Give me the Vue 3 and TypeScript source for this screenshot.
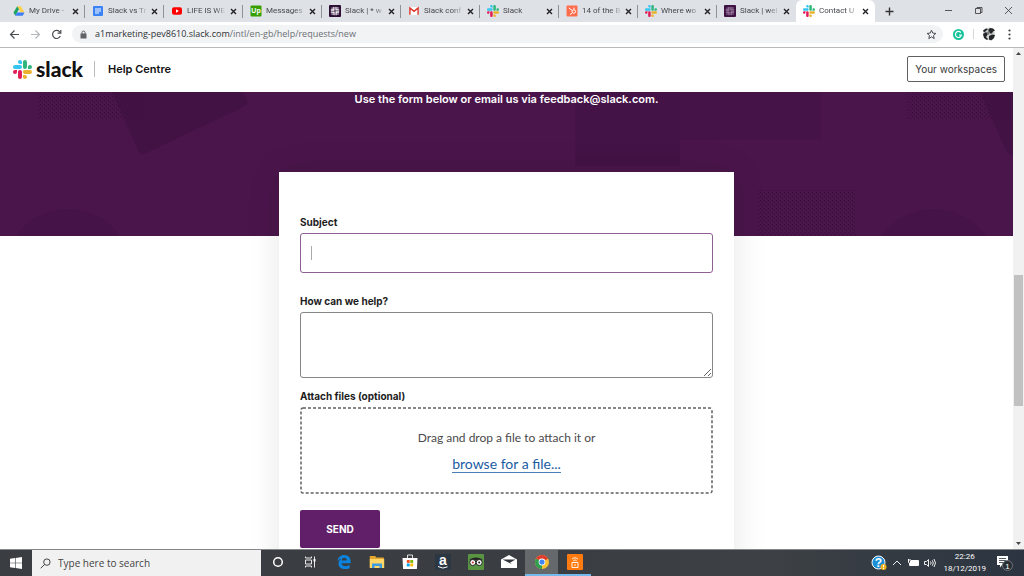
<script setup lang="ts">
import { ref } from 'vue'

interface Tab {
  title: string
  icon: string
  active?: boolean
}

const tabs: Tab[] = [
  { title: 'My Drive -', icon: 'drive' },
  { title: 'Slack vs Tr', icon: 'docs' },
  { title: 'LIFE IS WE', icon: 'youtube' },
  { title: 'Messages', icon: 'upwork' },
  { title: 'Slack | * w', icon: 'slack-dark' },
  { title: 'Slack conf', icon: 'gmail' },
  { title: 'Slack', icon: 'slack' },
  { title: '14 of the B', icon: 'hubspot' },
  { title: 'Where wo', icon: 'slack' },
  { title: 'Slack | wel', icon: 'slack-purple' },
  { title: 'Contact U', icon: 'slack', active: true },
]

const apps = [
  { name: 'Cortana', icon: 'cortana' },
  { name: 'Task view', icon: 'taskview' },
  { name: 'Edge', icon: 'edge' },
  { name: 'File Explorer', icon: 'folder' },
  { name: 'Store', icon: 'store' },
  { name: 'Amazon', icon: 'amazon' },
  { name: 'Tripadvisor', icon: 'trip' },
  { name: 'Mail', icon: 'mail' },
  { name: 'Chrome', icon: 'chrome', state: 'current' },
  { name: 'Hotspot', icon: 'hotspot', state: 'open' },
]

const subject = ref('')
const message = ref('')
const picker = ref<HTMLInputElement | null>(null)
</script>

<template>
  <div class="screen">
    <svg class="defs" aria-hidden="true">
      <symbol id="i-slack" viewBox="0 0 123 123">
        <path fill="#e01e5a" d="M25.8 77.6c0 7.1-5.8 12.9-12.9 12.9S0 84.7 0 77.6s5.8-12.9 12.9-12.9h12.9v12.9zm6.5 0c0-7.1 5.8-12.9 12.9-12.9s12.9 5.8 12.9 12.9v32.3c0 7.1-5.8 12.9-12.9 12.9s-12.9-5.8-12.9-12.9V77.6z" />
        <path fill="#36c5f0" d="M45.2 25.8c-7.1 0-12.9-5.8-12.9-12.9S38.1 0 45.2 0s12.9 5.8 12.9 12.9v12.9H45.2zm0 6.5c7.1 0 12.9 5.8 12.9 12.9s-5.8 12.9-12.9 12.9H12.9C5.8 58.1 0 52.3 0 45.2s5.8-12.9 12.9-12.9h32.3z" />
        <path fill="#2eb67d" d="M97 45.2c0-7.1 5.8-12.9 12.9-12.9s12.9 5.8 12.9 12.9-5.8 12.9-12.9 12.9H97V45.2zm-6.5 0c0 7.1-5.8 12.9-12.9 12.9s-12.9-5.8-12.9-12.9V12.900C64.700 5.800 70.500 0 77.600 0s12.900 5.800 12.900 12.900v32.300z" />
        <path fill="#ecb22e" d="M77.6 97c7.1 0 12.9 5.8 12.9 12.9s-5.8 12.9-12.9 12.9-12.9-5.8-12.9-12.9V97h12.9zm0-6.5c-7.1 0-12.9-5.8-12.9-12.9s5.8-12.9 12.9-12.9h32.3c7.1 0 12.9 5.8 12.9 12.9s-5.8 12.9-12.9 12.9H77.6z" />
      </symbol>
      <symbol id="i-hash" viewBox="0 0 12 12">
        <g fill="none" stroke-width="1.3" stroke-linecap="round">
          <path d="M4.9 2.3V5H2.3M7.1 9.7V7h2.6M9.7 4.9H7V2.3M2.3 7.1H5v2.6M3 3.1h.2M8.8 3h.2M3 9h.2M8.9 9h.2" />
        </g>
      </symbol>
      <symbol id="i-slack-dark" viewBox="0 0 12 12">
        <rect width="12" height="12" rx="1" fill="#2c0d33" />
        <use href="#i-hash" stroke="#fff" />
      </symbol>
      <symbol id="i-slack-purple" viewBox="0 0 12 12">
        <rect width="12" height="12" rx="1" fill="#3d1142" />
        <use href="#i-hash" stroke="#a283a6" />
      </symbol>
      <symbol id="i-drive" viewBox="0 0 12 12">
        <path fill="#ffcf48" d="M4.2 1.2h3.6l3.7 6.3H7.9z" />
        <path fill="#1da362" d="M4.2 1.2 6 4.3 2.3 10.8.5 7.6z" />
        <path fill="#3d7df5" d="M4.1 7.5h7.4l-1.8 3.3H2.3z" />
      </symbol>
      <symbol id="i-docs" viewBox="0 0 12 12">
        <rect x="1" y="1" width="10" height="10" rx="1" fill="#3b82f6" />
        <path stroke="#fff" stroke-width="1.1" d="M3 4h6M3 6h6M3 8h4" />
      </symbol>
      <symbol id="i-youtube" viewBox="0 0 12 12">
        <rect x="1" y="2.3" width="10" height="7.4" rx="2" fill="#f00" />
        <path fill="#fff" d="m5 4.3 2.9 1.7L5 7.7z" />
      </symbol>
      <symbol id="i-gmail" viewBox="0 0 12 12">
        <path fill="#fff" d="M1 2.2h10v7.6H1z" />
        <path fill="none" stroke="#d93025" stroke-width="1.4" d="M1.9 9.8V3L6 6.4 10.1 3v6.8" />
      </symbol>
      <symbol id="i-hubspot" viewBox="0 0 12 12">
        <rect x=".5" y=".5" width="11" height="11" rx="1" fill="#ff6e4c" />
        <path fill="none" stroke="#fff" d="m2.8 2.9 3.4 2.6M8 2.6v2M6 8 4 9.6" />
        <circle cx="7.8" cy="6.5" r="1.7" fill="none" stroke="#fff" />
      </symbol>

      <symbol id="i-cortana" viewBox="0 0 16 16">
        <circle cx="8" cy="8" r="4.3" fill="none" stroke="#fff" stroke-width="1.5" />
      </symbol>
      <symbol id="i-taskview" viewBox="0 0 16 16">
        <path fill="none" stroke="#e8e8e8" d="M2.5 2.5V4h6V2.5M2.5 13.5V12h6v1.5M2.5 6h6v4h-6zM11.5 2.5v11" />
        <path fill="#fff" d="M10.5 5h2v2.5h-2z" />
      </symbol>
      <symbol id="i-edge" viewBox="0 0 16 16">
        <path fill="#0b84e0" d="M1.4 7.1C1.9 3.4 4.6 1 8.2 1c4 0 6.4 2.8 6.4 6.4v1.8H5.5c.1 2.1 2 3 4.1 3 1.5 0 2.9-.4 4-1.1v3.1c-1.2.6-2.8.9-4.5.9-4 0-6.6-2-6.6-5.6 0-2.3 1.2-4.2 3.2-5.3-1.8.4-3.4 1.5-4.3 2.9zM5.6 6.5h5.2c0-1.7-.9-2.7-2.5-2.7-1.5 0-2.5 1.1-2.7 2.7z" />
      </symbol>
      <symbol id="i-folder" viewBox="0 0 16 16">
        <path fill="#e6a72e" d="M.8 2h5.4l1 1.5h7.6v10H.8z" />
        <path fill="#ffd766" d="M.8 5h14.400v9H.8z" />
        <path fill="#3d9be0" d="M3 14V9.500h10V14h-2.500v-2h-5v2z" />
      </symbol>
      <symbol id="i-store" viewBox="0 0 16 16">
        <path fill="none" stroke="#ddd" d="M5.5 4.500V1h5v3.500" />
        <path fill="#fff" d="M.5 4h15l-.6 11H1.100z" />
        <path fill="#f25022" d="M4.800 6h2.900v2.900H4.800z" />
        <path fill="#7fba00" d="M8.300 6h2.900v2.900H8.300z" />
        <path fill="#00a4ef" d="M4.800 9.500h2.900v2.900H4.800z" />
        <path fill="#ffb900" d="M8.300 9.500h2.900v2.900H8.300z" />
      </symbol>
      <symbol id="i-trip" viewBox="0 0 16 16">
        <rect width="16" height="16" rx="1" fill="#589442" />
        <path fill="#222" d="M1.5 5.200Q8 2 14.500 5.200l-1.500 1H3z" />
        <g stroke="#222" fill="#fff">
          <circle cx="4.8" cy="8.5" r="3" />
          <circle cx="11.2" cy="8.5" r="3" />
        </g>
        <circle cx="4.8" cy="8.5" r="1.1" fill="#c33" />
        <circle cx="11.2" cy="8.5" r="1.1" fill="#222" />
      </symbol>
      <symbol id="i-mail" viewBox="0 0 16 16">
        <path fill="#fff" d="M0 5.500 8 1l8 4.500V14H0z" />
        <path fill="#30363c" d="M1.500 5.500h13L9 8.700l2.500 1.800z" />
      </symbol>
      <symbol id="i-chrome" viewBox="0 0 16 16">
        <circle cx="8" cy="8" r="7" fill="#fbc02d" />
        <path fill="#df3b2f" d="M8 8 1.940 4.500A7 7 0 0 1 14.060 4.500z" />
        <path fill="#2f9e4f" d="M8 8v7A7 7 0 0 1 1.940 4.500z" />
        <path fill="#df3b2f" d="M8 4.500h6.060L8 8z" />
        <circle cx="8" cy="8" r="3.4" fill="#fff" />
        <circle cx="8" cy="8" r="2.6" fill="#4285f4" />
      </symbol>
      <symbol id="i-hotspot" viewBox="0 0 16 16">
        <rect width="16" height="16" rx="1" fill="#ff7b0f" />
        <path fill="none" stroke="#fff" stroke-width=".9" d="M5 5.200a4 4 0 0 1 6 0M6.300 6.800a2.300 2.300 0 0 1 3.400 0M5 8.500h6v5H5zM8 10v2" />
      </symbol>
    </svg>

    <nav class="tabstrip" aria-label="Tabs">
      <div v-for="(tab, i) in tabs" :key="i" class="tab" :class="{ active: tab.active, quiet: i === 9 }">
        <svg v-if="tab.icon === 'upwork'" class="favicon" viewBox="0 0 12 12">
          <rect x=".5" y=".5" width="11" height="11" rx="1" fill="#37a000" />
          <text x="6" y="8" font-family="Liberation Sans, sans-serif" font-weight="700" font-size="7" text-anchor="middle" fill="#fff">Up</text>
        </svg>
        <svg v-else class="favicon"><use :href="'#i-' + tab.icon" /></svg>
        <span class="tab-title">{{ tab.title }}</span>
        <button class="tab-close" aria-label="Close tab">
          <svg viewBox="0 0 7 7"><path d="m1 1 5 5m0-5L1 6" /></svg>
        </button>
      </div>
      <button class="new-tab" aria-label="New tab">
        <svg viewBox="0 0 9 9"><path d="M4.5.5v8m-4-4h8" /></svg>
      </button>
      <div class="window-controls">
        <button aria-label="Minimise"><svg viewBox="0 0 9 9"><path d="M1 4.5h7" /></svg></button>
        <button aria-label="Restore"><svg viewBox="0 0 9 9"><path d="M1.5 2.5h5v5h-5zM3 2.500v-1h5v5H6.500" /></svg></button>
        <button aria-label="Close"><svg viewBox="0 0 9 9"><path d="m1 1 7 7m0-7L1 8" /></svg></button>
      </div>
    </nav>

    <div class="toolbar">
      <button class="nav-btn" aria-label="Back"><svg viewBox="0 0 11 11"><path d="M10 5.5H1.500M5.500 1.500l-4 4 4 4" /></svg></button>
      <button class="nav-btn dim" aria-label="Forward"><svg viewBox="0 0 11 11"><path d="M1 5.5h8.500M5.500 1.500l4 4-4 4" /></svg></button>
      <button class="nav-btn" aria-label="Reload"><svg viewBox="0 0 11 11"><path d="M9.3 7A4 4 0 1 1 8.500 2.700L9.700 4" /><path d="M9.8 1v3.200H6.600" /></svg></button>
      <div class="address">
        <svg class="lock" viewBox="0 0 7 9"><path fill="#5f6368" d="M.5 3.500h6v5h-6z" /><path fill="none" stroke="#5f6368" d="M2 4V2.500a1.500 1.500 0 0 1 3 0V4" /></svg>
        <span class="url">a1marketing-pev8610.slack.com<span class="path">/intl/en-gb/help/requests/new</span></span>
        <svg class="star" viewBox="0 0 11 11"><path d="m5.500 1.200 1.300 2.900 3.100.3-2.400 2.100.7 3.100-2.700-1.700-2.700 1.700.7-3.100L1.100 4.400l3.100-.3z" /></svg>
      </div>
      <svg class="grammarly" viewBox="0 0 11 11">
        <circle cx="5.5" cy="5.5" r="5.5" fill="#15c39a" />
        <path fill="none" stroke="#fff" stroke-width="1.2" d="M7.800 3.600A3 3 0 1 0 8.400 6H6" />
      </svg>
      <span class="divider"></span>
      <svg class="avatar" viewBox="0 0 14 14">
        <path fill="#d4d6d2" d="M2 2q5-3 10 0l1 5-2 6H4L1 8z" />
        <path fill="#23262a" d="M1 3.500 4 1.500l2 .5-2 2-2 1.500zM6 3l2-2 3 .5 2 2-2 1-1 2H8l-1-2zM1 7l3-2 2 2-2 3 2 2-1 1-3-2zM7 9l3-1.500 3 .5-1 3-3 2.500-2-1z" />
        <path fill="#777" d="m5 5 2-1 1 2-2 2z" />
      </svg>
      <button class="kebab" aria-label="Menu">
        <svg viewBox="0 0 3 11"><circle cx="1.5" cy="1.5" r="1.1" /><circle cx="1.5" cy="5.5" r="1.1" /><circle cx="1.5" cy="9.5" r="1.1" /></svg>
      </button>
    </div>

    <div class="viewport">
      <div class="page">
        <header class="site-header">
          <a href="#" class="brand">
            <svg class="brand-mark"><use href="#i-slack" /></svg>
            <span class="brand-name">slack</span>
          </a>
          <a href="#" class="section">Help Centre</a>
          <a href="#" class="workspaces">Your workspaces</a>
        </header>

        <main>
          <section class="hero">
            <svg class="shapes" aria-hidden="true">
              <defs>
                <pattern id="dots" width="4" height="4" patternUnits="userSpaceOnUse">
                  <path fill="#350f38" d="M0 0h1v1H0zM2 2h1v1H2z" />
                </pattern>
              </defs>
              <g fill="#421244">
                <path d="M112 0h131l4 9q1 3-2 5L144 62q-3 1-5-2z" />
                <path d="M980 0h131l4 9q1 3-2 5l-101 48q-3 1-5-2z" />
                <path d="M680 0h141v48H680z" opacity=".6" />
                <path d="M575 0h105v74H575z" opacity=".6" />
                <ellipse cx="68" cy="175" rx="62" ry="58" opacity=".6" />
                <ellipse cx="934" cy="175" rx="62" ry="58" opacity=".6" />
              </g>
              <g fill="url(#dots)">
                <path d="M38 0h106v28H38z" />
                <path d="M906 0h106v28H906z" />
                <path d="M575 0h105v74H575z" opacity=".7" />
                <path d="M758 98h97v46h-97z" />
                <path d="M317 64h88v16h-88z" opacity=".2" />
              </g>
            </svg>
            <p>Use the form below or email us via feedback@slack.com.</p>
          </section>

          <form class="card" @submit.prevent>
            <label for="subject">Subject</label>
            <input id="subject" v-model="subject" class="subject" type="text" />
            <label for="message">How can we help?</label>
            <textarea id="message" v-model="message"></textarea>
            <label for="files">Attach files (optional)</label>
            <div class="dropzone">
              <svg class="outline" aria-hidden="true"><rect x="1" y="1" rx="2" /></svg>
              <input id="files" ref="picker" class="picker" type="file" multiple />
              <p>Drag and drop a file to attach it or</p>
              <p><a href="#" @click.prevent="picker?.click()">browse for a file...</a></p>
            </div>
            <button class="send" type="submit">SEND</button>
          </form>
        </main>
      </div>

      <div class="scrollbar" aria-hidden="true">
        <svg viewBox="0 0 11 11"><path d="m5.500 4 2.500 3H3z" /></svg>
        <div class="before"></div>
        <div class="thumb"></div>
        <div class="after"></div>
        <svg viewBox="0 0 11 11"><path d="M5.500 7 3 4h5z" /></svg>
      </div>
    </div>

    <footer class="taskbar">
      <button class="start" aria-label="Start">
        <svg viewBox="0 0 12 12"><path fill="#fff" d="M0 1.800 5 1v4.700H0zM5.600.9 12 0v5.700H5.600zM0 6.300h5V11l-5-.8zM5.600 6.300H12V12l-6.400-.9z" /></svg>
      </button>
      <label class="search">
        <svg viewBox="0 0 12 12"><circle cx="7.5" cy="4.5" r="3.5" /><path d="M5 7 .8 11.200" /></svg>
        <input type="text" placeholder="Type here to search" aria-label="Type here to search" />
      </label>
      <button v-for="app in apps" :key="app.name" class="app" :class="app.state" :aria-label="app.name">
        <svg v-if="app.icon === 'amazon'" viewBox="0 0 16 16">
          <rect width="16" height="16" fill="#2c3744" />
          <text x="8" y="11" font-family="Liberation Sans, sans-serif" font-weight="700" font-size="14" text-anchor="middle" fill="#fff">a</text>
          <path fill="none" stroke="#fff" d="M3 12.500q5 3 9.500.3" />
        </svg>
        <svg v-else><use :href="'#i-' + app.icon" /></svg>
      </button>
      <div class="tray">
        <svg class="help" viewBox="0 0 16 16">
          <circle cx="7.5" cy="7.5" r="6.5" fill="#1d8fd6" stroke="#fff" />
          <text x="7.5" y="12" font-family="Liberation Sans, sans-serif" font-weight="700" font-size="12" text-anchor="middle" fill="#fff">?</text>
          <circle cx="12.5" cy="12" r="3" fill="#f6b21b" />
          <path stroke="#fff" d="M12.500 10v2.300m0 .7v1" />
        </svg>
        <svg class="chevron" viewBox="0 0 10 10"><path d="m1 7 4-4 4 4" /></svg>
        <svg class="battery" viewBox="0 0 12 10"><path fill="#fff" d="M3 3h8v4H3z" /><path fill="none" stroke="#fff" d="M1 2h3M1.500 1v3q0 1 1 1v2.500h9v-5H4" /></svg>
        <svg class="speaker" viewBox="0 0 12 10"><path d="M.5 3.500h2l2-2v7l-2-2h-2zM6.500 3.500q1.300 1.500 0 3M8.300 2.300q2 2.700 0 5.400M10 1q3 4 0 8" /></svg>
        <div class="clock"><span>22:26</span><span>18/12/2019</span></div>
        <svg class="notice" viewBox="0 0 18 16">
          <path fill="#fff" d="M1 1h11v9H6l-2 2.500V10H1z" />
          <path stroke="#555b63" d="M3 3.500h7M3 5.500h7M3 7.500h5" />
          <circle cx="11.5" cy="10.5" r="5" fill="#2a2e33" stroke="#70757c" />
          <text x="11.5" y="13.5" font-family="Liberation Sans, sans-serif" font-size="8" text-anchor="middle" fill="#fff">1</text>
        </svg>
      </div>
    </footer>
  </div>
</template>

<style>
body {
  margin: 0;
}
</style>

<style scoped>
.screen {
  display: flex;
  flex-direction: column;
  height: 100vh;
  overflow: hidden;
  background: #fff;
  font-family: 'Open Sans', 'Noto Sans', sans-serif;
}
.screen *,
.screen *::before {
  box-sizing: border-box;
}
.defs {
  position: absolute;
  width: 0;
  height: 0;
}
button {
  padding: 0;
  border: 0;
  background: none;
}
a {
  color: inherit;
  text-decoration: none;
}
p {
  margin: 0;
}
svg {
  display: block;
  flex: none;
}

/* Browser tabs */
.tabstrip {
  display: flex;
  align-items: stretch;
  flex: none;
  height: 22px;
  padding-left: 6px;
  background: #dee1e6;
}
.tab {
  display: flex;
  align-items: center;
  flex: 0 1 79px;
  min-width: 0;
  padding: 0 6px 0 7px;
  background: linear-gradient(#8f9297, #8f9297) right center / 1px 13px no-repeat;
}
.tab.quiet {
  background: none;
}
.tab.active {
  border-radius: 6px 6px 0 0;
  background: #fff;
}
.favicon {
  width: 12px;
  height: 12px;
}
.tab-title {
  flex: 1;
  min-width: 0;
  margin: 0 3px 0 4px;
  overflow: hidden;
  white-space: nowrap;
  font-family: Roboto, sans-serif;
  font-size: 8px;
  line-height: 12px;
  color: #45484d;
  mask-image: linear-gradient(to right, #000 70%, transparent);
}
.tab-close,
.tab-close svg {
  width: 7px;
  height: 7px;
}
.tab-close svg {
  stroke: #202124;
  stroke-width: 1.4;
}
.new-tab {
  margin-left: 10px;
}
.new-tab svg {
  width: 9px;
  height: 9px;
  stroke: #333;
  stroke-width: 1.4;
}
.window-controls {
  display: flex;
  gap: 21px;
  margin-left: auto;
  padding: 0 11px 2px 0;
}
.window-controls svg {
  width: 9px;
  height: 9px;
  fill: none;
  stroke: #333;
  stroke-width: 0.8;
}

/* Address row */
.toolbar {
  display: flex;
  align-items: center;
  flex: none;
  height: 26px;
  padding: 0 13px 1px 9px;
  border-bottom: 1px solid #b9b9b9;
}
.nav-btn {
  margin-right: 10px;
}
.nav-btn svg {
  width: 11px;
  height: 11px;
  fill: none;
  stroke: #4a4d51;
  stroke-width: 1.2;
}
.nav-btn.dim svg {
  stroke: #b4b6b9;
}
.address {
  display: flex;
  align-items: center;
  flex: 1;
  min-width: 0;
  height: 18px;
  padding: 0 6px 0 8px;
  border-radius: 9px;
  background: #f1f3f4;
}
.lock {
  width: 7px;
  height: 9px;
}
.url {
  flex: 1;
  margin-left: 8px;
  overflow: hidden;
  white-space: nowrap;
  font-size: 9px;
  line-height: 14px;
  color: #303236;
}
.path {
  color: #6c7075;
}
.star {
  width: 11px;
  height: 11px;
  fill: none;
  stroke: #4a4d51;
}
.grammarly {
  width: 11px;
  height: 11px;
  margin-left: 10px;
}
.divider {
  width: 1px;
  height: 10px;
  margin: 0 8px 0 9px;
  background: #d4d6d9;
}
.avatar {
  width: 14px;
  height: 14px;
}
.kebab {
  margin-left: 12px;
}
.kebab svg {
  width: 3px;
  height: 11px;
  fill: #3c4043;
}

/* Web page */
.viewport {
  display: flex;
  flex: 1;
  min-height: 0;
}
.page {
  flex: 1;
  min-width: 0;
  overflow: hidden;
  font-family: Inter, 'Open Sans', sans-serif;
  color: #1d1c1d;
}
.site-header {
  display: flex;
  align-items: center;
  height: 44px;
  padding: 0 8px 2px 13px;
}
.brand {
  display: flex;
  align-items: center;
  gap: 4px;
}
.brand-mark {
  width: 19px;
  height: 19px;
}
.brand-name {
  font-family: Lato, sans-serif;
  font-weight: 900;
  font-size: 21px;
  line-height: 24px;
  color: #111;
}
.section {
  margin-left: 11px;
  padding-left: 13px;
  border-left: 1px solid #bbb;
  font-weight: 600;
  font-size: 11px;
  line-height: 16px;
  color: #111;
}
.workspaces {
  margin-left: auto;
  padding: 4px 7px;
  border: 1px solid #616061;
  border-radius: 2px;
  font-size: 10px;
  line-height: 16px;
  color: #3a393a;
}
.hero {
  position: relative;
  padding-bottom: 129px;
  overflow: hidden;
  background: #4a154b;
  color: #fff;
  text-align: center;
}
.shapes {
  position: absolute;
  inset: 0;
  width: 100%;
  height: 100%;
}
.hero p {
  position: relative;
  font-weight: 600;
  font-size: 11px;
  line-height: 15px;
}
.card {
  position: relative;
  display: flex;
  flex-direction: column;
  max-width: 455px;
  margin: -64px auto 0;
  padding: 42px 21px;
  background: #fff;
  box-shadow: 0 0 32px rgba(0, 0, 0, 0.1);
}
.card label {
  margin-bottom: 3px;
  font-weight: 700;
  font-size: 10px;
  line-height: 16px;
}
.subject,
textarea {
  width: 100%;
  padding: 8px 11px;
  border: 1px solid #868686;
  border-radius: 3px;
  outline: 0;
  background: #fff;
  font: inherit;
  font-size: 12px;
}
.subject {
  height: 40px;
  margin-bottom: 20px;
  border-color: #8d5f92;
  background: linear-gradient(#aaa, #aaa) 10px center / 1px 14px no-repeat;
}
.subject:focus {
  background: none;
}
textarea {
  display: block;
  height: 66px;
  margin-bottom: 10px;
  resize: vertical;
}
.dropzone {
  position: relative;
  padding: 18px 18px 16px;
  text-align: center;
  font-family: Lato, sans-serif;
  font-size: 12px;
  line-height: 26px;
  color: #4b4a4b;
}
.outline {
  position: absolute;
  inset: 0;
  width: 100%;
  height: 100%;
}
.outline rect {
  width: calc(100% - 2px);
  height: calc(100% - 2px);
  fill: none;
  stroke: #616061;
  stroke-width: 1.5;
  stroke-dasharray: 3 2;
}
.dropzone p {
  position: relative;
}
.dropzone a {
  border-bottom: 1px solid #4a80ba;
  font-size: 14px;
  color: #1a5ba3;
}
.picker {
  position: absolute;
  width: 1px;
  height: 1px;
  opacity: 0;
}
.send {
  align-self: flex-start;
  width: 80px;
  height: 38px;
  margin-top: 16px;
  border-radius: 2px;
  background: #611f69;
  font-family: inherit;
  font-weight: 700;
  font-size: 10px;
  color: #fff;
}

/* Page scrollbar */
.scrollbar {
  display: flex;
  flex-direction: column;
  flex: none;
  width: 11px;
  background: #f1f1f1;
}
.scrollbar svg {
  width: 11px;
  height: 11px;
  fill: #444;
}
.before {
  flex: 216;
}
.thumb {
  flex: 130;
  margin: 0 1px;
  background: #c1c1c1;
}
.after {
  flex: 132;
}

/* Windows taskbar */
.taskbar {
  display: flex;
  align-items: stretch;
  flex: none;
  height: 27px;
  border-top: 1px solid #85878a;
  background: linear-gradient(to right, #3a3e43 55%, #3d4145 75%, #2b3440);
}
.start {
  display: grid;
  place-items: center;
  width: 32px;
}
.start svg {
  width: 12px;
  height: 12px;
}
.search {
  display: flex;
  align-items: center;
  flex: 0 1 229px;
  gap: 7px;
  padding-left: 8px;
  background: #f1f1f1;
}
.search svg {
  width: 11px;
  height: 11px;
  fill: none;
  stroke: #333;
}
.search input {
  flex: 1;
  min-width: 0;
  padding: 0;
  border: 0;
  background: none;
  font: inherit;
  font-size: 10px;
}
.search input::placeholder {
  color: #444;
}
.app {
  display: grid;
  place-items: center;
  width: 33px;
  border-bottom: 2px solid transparent;
}
.app svg {
  width: 16px;
  height: 16px;
}
.app.current {
  border-color: #76b9ed;
  background: #66696c;
}
.app.open {
  border-color: #76b9ed;
}
.tray {
  display: flex;
  align-items: center;
  gap: 5px;
  margin-left: auto;
  padding-right: 10px;
}
.help {
  width: 16px;
  height: 16px;
}
.tray .chevron,
.tray .speaker {
  fill: none;
  stroke: #eee;
}
.chevron {
  width: 10px;
  height: 10px;
}
.battery,
.speaker {
  width: 12px;
  height: 10px;
}
.clock {
  display: flex;
  flex-direction: column;
  align-items: center;
  margin: 0 5px 0 2px;
  font-family: Roboto, sans-serif;
  font-size: 8px;
  line-height: 12px;
  color: #fff;
}
.notice {
  width: 18px;
  height: 16px;
}
</style>
